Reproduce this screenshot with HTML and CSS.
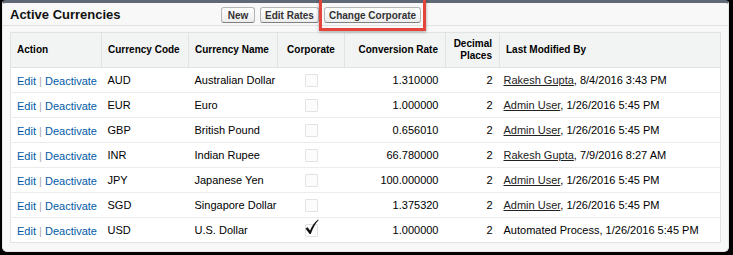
FILE: index.html
```html
<!DOCTYPE html>
<html lang="en">
<head>
    <meta charset="UTF-8">
    <title>Active Currencies</title>
    <link rel="stylesheet" href="styles.css">
</head>
<body>
    <div class="panel">
        <div class="panel-header">
            <h2>Active Currencies</h2>
            <div class="buttons">
                <button class="btn-new">New</button>
                <button>Edit Rates</button>
                <span class="highlight"><button>Change Corporate</button></span>
            </div>
        </div>

        <table class="list">
            <colgroup>
                <col style="width: 91px">
                <col style="width: 87px">
                <col style="width: 89px">
                <col style="width: 67px">
                <col style="width: 101px">
                <col style="width: 54px">
                <col>
            </colgroup>
            <thead>
                <tr>
                    <th>Action</th>
                    <th>Currency Code</th>
                    <th>Currency Name</th>
                    <th class="center">Corporate</th>
                    <th class="right">Conversion Rate</th>
                    <th class="right">Decimal Places</th>
                    <th>Last Modified By</th>
                </tr>
            </thead>
            <tbody>
                <tr>
                    <td class="action"><a href="#">Edit</a> <span class="sep">|</span> <a href="#">Deactivate</a></td>
                    <td>AUD</td>
                    <td>Australian Dollar</td>
                    <td class="center"><span class="checkbox"></span></td>
                    <td class="right">1.310000</td>
                    <td class="right">2</td>
                    <td><a class="user" href="#">Rakesh Gupta</a>, 8/4/2016 3:43 PM</td>
                </tr>
                <tr>
                    <td class="action"><a href="#">Edit</a> <span class="sep">|</span> <a href="#">Deactivate</a></td>
                    <td>EUR</td>
                    <td>Euro</td>
                    <td class="center"><span class="checkbox"></span></td>
                    <td class="right">1.000000</td>
                    <td class="right">2</td>
                    <td><a class="user" href="#">Admin User</a>, 1/26/2016 5:45 PM</td>
                </tr>
                <tr>
                    <td class="action"><a href="#">Edit</a> <span class="sep">|</span> <a href="#">Deactivate</a></td>
                    <td>GBP</td>
                    <td>British Pound</td>
                    <td class="center"><span class="checkbox"></span></td>
                    <td class="right">0.656010</td>
                    <td class="right">2</td>
                    <td><a class="user" href="#">Admin User</a>, 1/26/2016 5:45 PM</td>
                </tr>
                <tr>
                    <td class="action"><a href="#">Edit</a> <span class="sep">|</span> <a href="#">Deactivate</a></td>
                    <td>INR</td>
                    <td>Indian Rupee</td>
                    <td class="center"><span class="checkbox"></span></td>
                    <td class="right">66.780000</td>
                    <td class="right">2</td>
                    <td><a class="user" href="#">Rakesh Gupta</a>, 7/9/2016 8:27 AM</td>
                </tr>
                <tr>
                    <td class="action"><a href="#">Edit</a> <span class="sep">|</span> <a href="#">Deactivate</a></td>
                    <td>JPY</td>
                    <td>Japanese Yen</td>
                    <td class="center"><span class="checkbox"></span></td>
                    <td class="right">100.000000</td>
                    <td class="right">2</td>
                    <td><a class="user" href="#">Admin User</a>, 1/26/2016 5:45 PM</td>
                </tr>
                <tr>
                    <td class="action"><a href="#">Edit</a> <span class="sep">|</span> <a href="#">Deactivate</a></td>
                    <td>SGD</td>
                    <td>Singapore Dollar</td>
                    <td class="center"><span class="checkbox"></span></td>
                    <td class="right">1.375320</td>
                    <td class="right">2</td>
                    <td><a class="user" href="#">Admin User</a>, 1/26/2016 5:45 PM</td>
                </tr>
                <tr>
                    <td class="action"><a href="#">Edit</a> <span class="sep">|</span> <a href="#">Deactivate</a></td>
                    <td>USD</td>
                    <td>U.S. Dollar</td>
                    <td class="center">
                        <span class="checkbox checked">
                            <svg width="14" height="16" viewBox="0 0 14 16"><path d="M0.5 9.5 L2.6 8.2 L5 11.6 C7 7 9.5 3.2 13.2 0.6 L13.6 1.2 C10.4 4.4 8 8.6 5.8 15 L4.6 15 Z" fill="#111"/></svg>
                        </span>
                    </td>
                    <td class="right">1.000000</td>
                    <td class="right">2</td>
                    <td>Automated Process, 1/26/2016 5:45 PM</td>
                </tr>
            </tbody>
        </table>
    </div>
</body>
</html>
```

FILE: styles.css
```css
html, body {
    margin: 0;
    padding: 0;
    background-color: #000;
}
body {
    font-family: "Liberation Sans", Arial, sans-serif;
    font-size: 11px;
    line-height: 13px;
    color: #000;
    padding: 0 4px 3px 2px;
}
.panel {
    height: 252px;
    background-color: #f8f8f8;
    border: 1px solid #e6e6e6;
    border-top: 3px solid #5f6976;
    border-radius: 4px 4px 5px 5px;
    box-sizing: border-box;
}
.panel-header {
    display: flex;
    align-items: center;
    height: 22px;
    border-bottom: 1px solid #e2e2e2;
    padding: 0 0 0 7px;
}
h2 {
    margin: 0;
    font-size: 13px;
    font-weight: bold;
    color: #111;
    width: 211px;
}
.buttons {
    display: flex;
    align-items: center;
    gap: 5px;
    margin-top: 2px;
}
button {
    font-family: "Liberation Sans", Arial, sans-serif;
    font-size: 10px;
    font-weight: bold;
    color: #333;
    height: 16px;
    padding: 0 4px;
    background: linear-gradient(#ffffff, #ededed);
    border: 1px solid #b5b5b5;
    border-bottom-color: #7f7f7f;
    border-radius: 3px;
}
.btn-new {
    min-width: 34px;
}
.highlight {
    display: flex;
    position: relative;
}
.highlight::after {
    content: "";
    position: absolute;
    left: -5px;
    right: -5px;
    top: -10px;
    bottom: -8px;
    border: 3px solid #e3453d;
    box-shadow: 0 1px 3px rgba(0,0,0,0.35);
}
.list {
    margin: 6px 0 0 7px;
    width: 711px;
    border-collapse: collapse;
    table-layout: fixed;
    background-color: #fff;
    border: 1px solid #e0e3e5;
}
th {
    height: 34px;
    background-color: #f2f3f3;
    font-size: 10px;
    line-height: 12px;
    font-weight: bold;
    color: #000;
    text-align: left;
    padding: 0 6px;
    border-right: 1px solid #e0e3e5;
    border-bottom: 1px solid #e0e3e5;
}
th:last-child {
    border-right: none;
}
th.right {
    padding-right: 7px;
}
td {
    height: 24px;
    padding: 0 6px;
    border-bottom: 1px solid #ececec;
    white-space: nowrap;
}
td.right {
    padding-right: 7px;
}
tr:last-child td {
    border-bottom: none;
}
td:last-child {
    padding-left: 4px;
}
td.action {
    height: 22px;
    padding-top: 2px;
}
.center {
    text-align: center;
}
.right {
    text-align: right;
}
a {
    color: #015ba7;
    text-decoration: none;
}
.sep {
    color: #aaa;
}
a.user {
    color: #222;
    text-decoration: underline;
}
.checkbox {
    display: inline-block;
    position: relative;
    width: 11px;
    height: 11px;
    border: 1px solid #e3e3e3;
    border-radius: 1px;
    background-color: #fcfcfc;
    vertical-align: middle;
}
.checkbox svg {
    position: absolute;
    left: -1px;
    top: -6px;
}
```
